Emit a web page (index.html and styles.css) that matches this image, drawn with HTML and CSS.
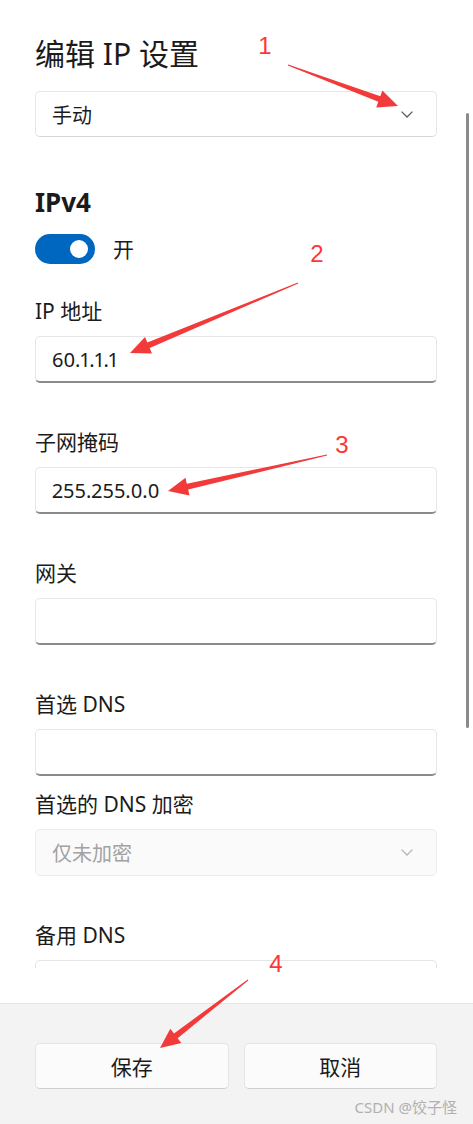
FILE: index.html
```html
<!DOCTYPE html>
<html lang="zh-CN">
<head>
  <meta charset="UTF-8" />
  <title>编辑 IP 设置</title>
  <link rel="stylesheet" href="styles.css">
</head>
<body>
  <div class="dialog">
    <div class="body">
      <div class="scroll">
        <h1 class="title">编辑 IP 设置</h1>
        <div class="select">
          <span>手动</span>
          <svg class="chevron" width="12" height="7" viewBox="0 0 12 7"><path d="M0.6 0.6 L6 6 L11.4 0.6" /></svg>
        </div>

        <h2 class="section">IPv4</h2>
        <div class="toggle-row">
          <div class="toggle"><span class="knob"></span></div>
          <span>开</span>
        </div>

        <label class="label">IP 地址</label>
        <input class="field" value="60.1.1.1">

        <label class="label">子网掩码</label>
        <input class="field" value="255.255.0.0">

        <label class="label">网关</label>
        <input class="field" value="">

        <label class="label">首选 DNS</label>
        <input class="field" value="">

        <label class="label near">首选的 DNS 加密</label>
        <div class="select disabled">
          <span>仅未加密</span>
          <svg class="chevron" width="12" height="7" viewBox="0 0 12 7"><path d="M0.6 0.6 L6 6 L11.4 0.6" /></svg>
        </div>

        <label class="label">备用 DNS</label>
        <input class="field" value="">
      </div>
      <div class="scrollbar"></div>
    </div>

    <div class="footer">
      <div class="buttons">
        <button class="btn">保存</button>
        <button class="btn">取消</button>
      </div>
      <div class="watermark">CSDN @饺子怪</div>
    </div>

    <!-- red annotations drawn over the screenshot -->
    <svg class="marks" width="473" height="1124" viewBox="0 0 473 1124">
      <text x="265" y="54">1</text>
      <polygon points="287.8,65.5 378.3,101.8 376.2,107.4 398,106 382.4,90.6 380.3,96.2 288.2,64.5" />
      <text x="317" y="262">2</text>
      <polygon points="297.8,282.5 147.3,342.5 145,337 130,353 152,353.6 149.7,348.1 298.2,283.5" />
      <text x="342" y="453">3</text>
      <polygon points="326.9,454.5 186.8,483.7 185.5,477.8 168,491 189.5,495.4 188.2,489.5 327.1,455.5" />
      <text x="276" y="972">4</text>
      <polygon points="247.7,979.6 174,1033.4 170.3,1028.7 160,1048 181.3,1042.9 177.6,1038.2 248.3,980.4" />
    </svg>
  </div>
</body>
</html>
```

FILE: styles.css
```css
body {
  margin: 0;
  background: #fff;
  font-family: "Noto Sans", "Noto Sans CJK SC", sans-serif;
  color: #1b1b1b;
}
.dialog {
  position: relative;
  width: 473px;
  height: 1124px;
  display: flex;
  flex-direction: column;
  overflow: hidden;
}
.body {
  position: relative;
  height: 1003px;
  padding-bottom: 35px;
  box-sizing: border-box;
  background: #fff;
}
.scroll {
  height: 100%;
  overflow: hidden;
  padding: 0 36px 0 35px;
  display: flex;
  flex-direction: column;
}
.title {
  margin: 34px 0 0;
  font-size: 30px;
  line-height: 40px;
  font-weight: 400;
}
.select {
  margin-top: 17px;
  height: 46px;
  box-sizing: border-box;
  border: 1px solid #e6e6e6;
  border-bottom-color: #d6d6d6;
  border-radius: 5px;
  background: #fff;
  display: flex;
  align-items: center;
  justify-content: space-between;
  padding: 0 23px 0 16px;
  font-size: 20px;
  flex-shrink: 0;
}
.chevron path {
  fill: none;
  stroke: #5c5c5c;
  stroke-width: 1.3;
}
.select.disabled {
  margin-top: 11px;
  height: 47px;
  background: #fafafa;
  border-color: #ececec;
  color: #a2a2a2;
}
.select.disabled .chevron path {
  stroke: #b3b3b3;
}
.section {
  margin: 47px 0 0;
  font-size: 26px;
  line-height: 36px;
  font-weight: 700;
}
.toggle-row {
  margin-top: 14px;
  display: flex;
  align-items: center;
  gap: 18px;
  font-size: 21px;
  line-height: 30px;
}
.toggle {
  width: 60px;
  height: 30px;
  border-radius: 15px;
  background: #0067c0;
  display: flex;
  align-items: center;
  justify-content: flex-end;
  padding: 0 7px;
  box-sizing: border-box;
}
.knob {
  width: 18px;
  height: 18px;
  border-radius: 50%;
  background: #fff;
}
.label {
  display: block;
  margin-top: 33px;
  font-size: 21px;
  line-height: 28px;
}
.field + .label,
.select + .label {
  margin-top: 45px;
}
.field + .label.near {
  margin-top: 14px;
}
.field {
  margin-top: 11px;
  height: 47px;
  flex-shrink: 0;
  box-sizing: border-box;
  border: 1px solid #e6e6e6;
  border-bottom: 2px solid #8a8a8a;
  border-radius: 5px;
  background: #fff;
  padding: 0 16px;
  font: inherit;
  font-size: 20px;
  font-variant-numeric: proportional-nums;
  color: #1b1b1b;
  outline: none;
}
.scrollbar {
  position: absolute;
  right: 4px;
  top: 113px;
  width: 3px;
  height: 615px;
  border-radius: 2px;
  background: #8a8a8a;
}
.footer {
  flex: 1;
  background: #f3f3f3;
  border-top: 1px solid #e5e5e5;
  padding-top: 39px;
}
.buttons {
  display: grid;
  grid-template-columns: 1fr 1fr;
  gap: 15px;
  padding: 0 36px 0 35px;
}
.btn {
  height: 46px;
  border: 1px solid #e5e5e5;
  border-bottom-color: #cfcfcf;
  border-radius: 5px;
  background: #fbfbfb;
  font: inherit;
  font-size: 21px;
  color: #1b1b1b;
}
.watermark {
  margin-top: 8px;
  padding-right: 16px;
  text-align: right;
  font-size: 15px;
  line-height: 20px;
  color: #b0b0b0;
}
.marks {
  position: absolute;
  left: 0;
  top: 0;
  pointer-events: none;
}
.marks polygon {
  fill: #f23a3a;
}
.marks text {
  fill: #ff3636;
  font-family: "Liberation Sans", sans-serif;
  font-size: 24px;
  text-anchor: middle;
}
```
